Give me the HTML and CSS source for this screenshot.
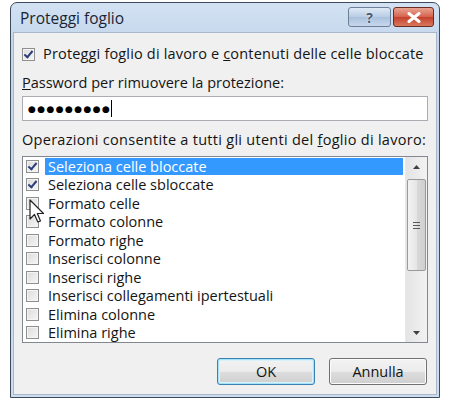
FILE: index.html
```html
<!DOCTYPE html>
<html lang="it">
<head>
    <meta charset="UTF-8">
    <title>Proteggi foglio</title>
    <link rel="stylesheet" href="styles.css">
</head>
<body>
    <div class="window">
        <div class="titlebar">
            <div class="title">Proteggi foglio</div>
            <div class="caption-buttons">
                <div class="cap-btn help">?</div>
                <div class="cap-btn close">
                    <svg width="14" height="11" viewBox="0 0 14 11">
                        <path d="M2 1.5 L12 9.5 M12 1.5 L2 9.5" stroke="#fff" stroke-width="3" stroke-linecap="round"/>
                    </svg>
                </div>
            </div>
        </div>

        <div class="content">
            <div class="check-row">
                <span class="box checked"></span>
                <span>Proteggi foglio di lavoro e <u>c</u>ontenuti delle celle bloccate</span>
            </div>

            <div class="label pw-label"><u>P</u>assword per rimuovere la protezione:</div>
            <div class="password">
                <span class="dots">●●●●●●●●●</span><span class="caret"></span>
            </div>

            <div class="label ops-label">Operazioni consentite a tutti gli utenti del <u>f</u>oglio di lavoro:</div>

            <div class="listbox">
                <div class="items">
                    <div class="item selected"><span class="box checked"></span><span class="text">Seleziona celle bloccate</span></div>
                    <div class="item"><span class="box checked"></span><span class="text">Seleziona celle sbloccate</span></div>
                    <div class="item"><span class="box"></span><span class="text">Formato celle</span></div>
                    <div class="item"><span class="box"></span><span class="text">Formato colonne</span></div>
                    <div class="item"><span class="box"></span><span class="text">Formato righe</span></div>
                    <div class="item"><span class="box"></span><span class="text">Inserisci colonne</span></div>
                    <div class="item"><span class="box"></span><span class="text">Inserisci righe</span></div>
                    <div class="item"><span class="box"></span><span class="text">Inserisci collegamenti ipertestuali</span></div>
                    <div class="item"><span class="box"></span><span class="text">Elimina colonne</span></div>
                    <div class="item"><span class="box"></span><span class="text">Elimina righe</span></div>
                </div>
                <div class="scrollbar">
                    <div class="arrow">
                        <svg width="7" height="4" viewBox="0 0 7 4"><path d="M0 4 L3.5 0 L7 4 Z" fill="#404040"/></svg>
                    </div>
                    <div class="track">
                        <div class="thumb">
                            <span class="grip"></span>
                        </div>
                    </div>
                    <div class="arrow">
                        <svg width="7" height="4" viewBox="0 0 7 4"><path d="M0 0 L7 0 L3.5 4 Z" fill="#404040"/></svg>
                    </div>
                </div>

                <!-- mouse pointer over the list -->
                <svg class="cursor" width="16" height="25" viewBox="0 0 16 25">
                    <path d="M1 1 L1 20 L5.5 15.5 L8.8 23 L11.5 22 L8.3 14.5 L14.5 14.5 Z" fill="#fff" stroke="#222" stroke-width="1.2" stroke-linejoin="round"/>
                </svg>
            </div>

            <div class="buttons">
                <button class="btn default">OK</button>
                <button class="btn">Annulla</button>
            </div>
        </div>
    </div>
</body>
</html>
```

FILE: styles.css
```css
body {
    margin: 0;
    background-color: #ffffff;
    font-family: "Open Sans", "DejaVu Sans", sans-serif;
    font-size: 14.5px;
    color: #141414;
}

.window {
    box-sizing: border-box;
    width: 430px;
    height: 396px;
    margin: 2px 0 0 10px;
    border: 1px solid #3d4b5c;
    border-radius: 7px 7px 0 0;
    background: linear-gradient(#d3e2f3, #c3d6ec 40px, #cddcee);
    padding: 0 2px 2px 2px;
    display: flex;
    flex-direction: column;
}

.titlebar {
    height: 29px;
    display: flex;
    align-items: flex-start;
    justify-content: space-between;
}

.title {
    font-size: 15.5px;
    line-height: 22px;
    padding: 4px 0 0 7px;
    color: #1b2433;
}

.caption-buttons {
    display: flex;
    margin-top: 4px;
    margin-right: 3px;
}

.cap-btn {
    box-sizing: border-box;
    height: 20px;
    border: 1px solid #6d7f95;
    border-radius: 3px;
    display: flex;
    align-items: center;
    justify-content: center;
}

.help {
    width: 43px;
    margin-right: 2px;
    background: linear-gradient(#dfe9f5, #b8cce4 50%, #a9c0dc 51%, #c7d8ec);
    color: #4a5a70;
    font-size: 14px;
    font-weight: bold;
    text-shadow: 0 0 2px #fff;
}

.close {
    width: 41px;
    border-color: #6b2a22;
    background: linear-gradient(#e8a593, #d5614c 50%, #c4412c 51%, #d8785e);
}

.content {
    flex: 1;
    background-color: #f0f0f0;
    border: 1px solid #a9b8c9;
    padding: 13px 8px 0 8px;
    display: flex;
    flex-direction: column;
}

.check-row {
    display: flex;
    align-items: center;
    height: 16px;
    line-height: 16px;
    white-space: nowrap;
    letter-spacing: 0.17px;
}

.check-row .box {
    margin-right: 8px;
}

.box {
    box-sizing: border-box;
    width: 13px;
    height: 13px;
    flex: none;
    border: 1px solid #8f8f8f;
    background: linear-gradient(135deg, #dcdcdc, #f6f6f6);
    box-shadow: inset 0 0 0 1px #f4f4f4;
    position: relative;
}

.box.checked::after {
    content: "";
    position: absolute;
    left: 3px;
    top: 0px;
    width: 3px;
    height: 7px;
    border: solid #2b3e7a;
    border-width: 0 2px 2px 0;
    transform: rotate(40deg);
}

.label {
    height: 16px;
    line-height: 16px;
    white-space: nowrap;
}

.pw-label {
    margin-top: 13px;
}

.password {
    box-sizing: border-box;
    height: 25px;
    margin-top: 5px;
    background-color: #ffffff;
    border: 1px solid #abadb3;
    display: flex;
    align-items: center;
    padding-left: 5px;
}

.dots {
    font-family: "DejaVu Sans", sans-serif;
    font-size: 9px;
    letter-spacing: 1.4px;
    color: #000;
}

.caret {
    width: 1px;
    height: 17px;
    background-color: #000;
}

.ops-label {
    margin-top: 11px;
    letter-spacing: 0.28px;
}

.listbox {
    position: relative;
    box-sizing: border-box;
    height: 187px;
    margin-top: 8px;
    background-color: #ffffff;
    border: 1px solid #828790;
    display: flex;
}

.items {
    flex: 1;
    padding-right: 2px;
}

.item {
    height: 18.5px;
    display: flex;
    align-items: center;
    padding-left: 3px;
    white-space: nowrap;
}

.item .text {
    margin-left: 6px;
    padding-left: 3px;
    flex: 1;
    height: 17px;
    line-height: 17px;
}

.item.selected .text {
    background-color: #3399ff;
    color: #ffffff;
}

.scrollbar {
    width: 21px;
    display: flex;
    flex-direction: column;
    background: linear-gradient(90deg, #e4e4e4, #f2f2f2);
    border-left: 1px solid #e8e8e8;
}

.arrow {
    height: 19px;
    display: flex;
    align-items: center;
    justify-content: center;
}

.track {
    flex: 1;
    padding: 3px 1px 0 1px;
}

.thumb {
    box-sizing: border-box;
    height: 92px;
    border: 1px solid #9a9a9a;
    border-radius: 2px;
    background: linear-gradient(90deg, #f3f3f3, #e6e6e6 50%, #d9d9d9 51%, #d0d0d0);
    display: flex;
    align-items: center;
    justify-content: center;
}

.grip {
    width: 7px;
    height: 5px;
    border-top: 1px solid #5a5a5a;
    border-bottom: 1px solid #5a5a5a;
    position: relative;
}

.grip::after {
    content: "";
    position: absolute;
    left: 0;
    right: 0;
    top: 2px;
    border-top: 1px solid #5a5a5a;
}

.cursor {
    position: absolute;
    left: 6px;
    top: 42px;
}

.buttons {
    display: flex;
    justify-content: flex-end;
    gap: 14px;
    margin-top: 15px;
    padding-right: 1px;
}

.btn {
    box-sizing: border-box;
    height: 27px;
    width: 98px;
    font-family: "Open Sans", "DejaVu Sans", sans-serif;
    font-size: 14.5px;
    color: #141414;
    border: 1px solid #707070;
    border-radius: 3px;
    background: linear-gradient(#f3f3f3, #ebebeb 50%, #dddddd 51%, #cfcfcf);
    box-shadow: inset 0 0 0 1px #fcfcfc;
    padding: 0;
}

.btn.default {
    border-color: #3c7fb1;
    box-shadow: inset 0 0 0 1px #a6e3f7, inset 0 0 0 2px #d8f2fb;
}
```
